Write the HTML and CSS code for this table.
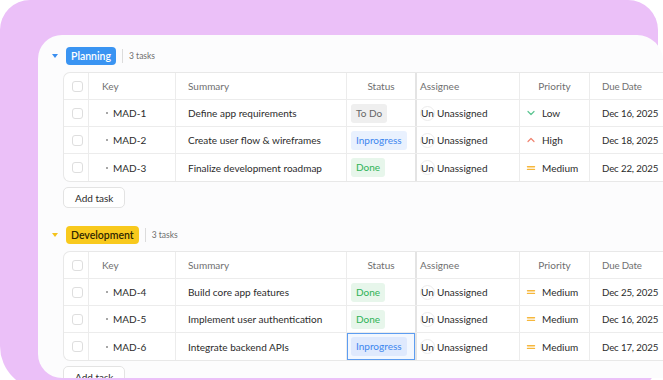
FILE: index.html
```html
<!DOCTYPE html>
<html>
<head>
<meta charset="utf-8">
<link rel="stylesheet" href="styles.css">
</head>
<body>
<div class="frame">
  <div class="card">
    <section class="group">
      <div class="group-head">
        <span class="caret caret-blue"></span>
        <span class="badge badge-blue">Planning</span>
        <span class="sep"></span>
        <span class="count">3 tasks</span>
      </div>
      <div class="table">
        <div class="row head">
          <div class="cell c-check"><span class="box"></span></div>
          <div class="cell c-key">Key</div>
          <div class="cell c-sum">Summary</div>
          <div class="cell c-status center">Status</div>
          <div class="cell c-assign">Assignee</div>
          <div class="cell c-prio center">Priority</div>
          <div class="cell c-date">Due Date</div>
        </div>
        <div class="row">
          <div class="cell c-check"><span class="box"></span></div>
          <div class="cell c-key"><span class="dot"></span>MAD-1</div>
          <div class="cell c-sum">Define app requirements</div>
          <div class="cell c-status"><span class="pill todo">To Do</span></div>
          <div class="cell c-assign"><span class="avatar">Un</span>Unassigned</div>
          <div class="cell c-prio"><svg class="picon" viewBox="0 0 10 10"><path d="M2 3.5 L5 6.5 L8 3.5" fill="none" stroke="#5cc592" stroke-width="1.2" stroke-linecap="round" stroke-linejoin="round"/></svg>Low</div>
          <div class="cell c-date">Dec 16, 2025</div>
        </div>
        <div class="row">
          <div class="cell c-check"><span class="box"></span></div>
          <div class="cell c-key"><span class="dot"></span>MAD-2</div>
          <div class="cell c-sum">Create user flow &amp; wireframes</div>
          <div class="cell c-status"><span class="pill prog">Inprogress</span></div>
          <div class="cell c-assign"><span class="avatar">Un</span>Unassigned</div>
          <div class="cell c-prio"><svg class="picon" viewBox="0 0 10 10"><path d="M2 6.5 L5 3.5 L8 6.5" fill="none" stroke="#f08470" stroke-width="1.2" stroke-linecap="round" stroke-linejoin="round"/></svg>High</div>
          <div class="cell c-date">Dec 18, 2025</div>
        </div>
        <div class="row">
          <div class="cell c-check"><span class="box"></span></div>
          <div class="cell c-key"><span class="dot"></span>MAD-3</div>
          <div class="cell c-sum">Finalize development roadmap</div>
          <div class="cell c-status"><span class="pill done">Done</span></div>
          <div class="cell c-assign"><span class="avatar">Un</span>Unassigned</div>
          <div class="cell c-prio"><svg class="picon" viewBox="0 0 10 10"><path d="M1.5 3.8 H8.5 M1.5 6.4 H8.5" fill="none" stroke="#f6b73c" stroke-width="1.4" stroke-linecap="round"/></svg>Medium</div>
          <div class="cell c-date">Dec 22, 2025</div>
        </div>
      </div>
      <button class="add">Add task</button>
    </section>

    <section class="group">
      <div class="group-head">
        <span class="caret caret-yellow"></span>
        <span class="badge badge-yellow">Development</span>
        <span class="sep"></span>
        <span class="count">3 tasks</span>
      </div>
      <div class="table">
        <div class="row head">
          <div class="cell c-check"><span class="box"></span></div>
          <div class="cell c-key">Key</div>
          <div class="cell c-sum">Summary</div>
          <div class="cell c-status center">Status</div>
          <div class="cell c-assign">Assignee</div>
          <div class="cell c-prio center">Priority</div>
          <div class="cell c-date">Due Date</div>
        </div>
        <div class="row">
          <div class="cell c-check"><span class="box"></span></div>
          <div class="cell c-key"><span class="dot"></span>MAD-4</div>
          <div class="cell c-sum">Build core app features</div>
          <div class="cell c-status"><span class="pill done">Done</span></div>
          <div class="cell c-assign"><span class="avatar">Un</span>Unassigned</div>
          <div class="cell c-prio"><svg class="picon" viewBox="0 0 10 10"><path d="M1.5 3.8 H8.5 M1.5 6.4 H8.5" fill="none" stroke="#f6b73c" stroke-width="1.4" stroke-linecap="round"/></svg>Medium</div>
          <div class="cell c-date">Dec 25, 2025</div>
        </div>
        <div class="row">
          <div class="cell c-check"><span class="box"></span></div>
          <div class="cell c-key"><span class="dot"></span>MAD-5</div>
          <div class="cell c-sum">Implement user authentication</div>
          <div class="cell c-status"><span class="pill done">Done</span></div>
          <div class="cell c-assign"><span class="avatar">Un</span>Unassigned</div>
          <div class="cell c-prio"><svg class="picon" viewBox="0 0 10 10"><path d="M1.5 3.8 H8.5 M1.5 6.4 H8.5" fill="none" stroke="#f6b73c" stroke-width="1.4" stroke-linecap="round"/></svg>Medium</div>
          <div class="cell c-date">Dec 16, 2025</div>
        </div>
        <div class="row">
          <div class="cell c-check"><span class="box"></span></div>
          <div class="cell c-key"><span class="dot"></span>MAD-6</div>
          <div class="cell c-sum">Integrate backend APIs</div>
          <div class="cell c-status selected"><span class="pill prog sel">Inprogress</span></div>
          <div class="cell c-assign"><span class="avatar">Un</span>Unassigned</div>
          <div class="cell c-prio"><svg class="picon" viewBox="0 0 10 10"><path d="M1.5 3.8 H8.5 M1.5 6.4 H8.5" fill="none" stroke="#f6b73c" stroke-width="1.4" stroke-linecap="round"/></svg>Medium</div>
          <div class="cell c-date">Dec 17, 2025</div>
        </div>
      </div>
      <button class="add">Add task</button>
    </section>
  </div>
</div>
</body>
</html>
```

FILE: styles.css
```css
* { box-sizing: border-box; }
html, body {
  margin: 0;
  padding: 0;
  background: #ffffff;
  width: 663px;
  height: 380px;
  overflow: hidden;
  font-family: "Lato", "Open Sans", sans-serif;
  color: #2b2b2b;
}
.frame {
  width: 658px;
  height: 390px;
  background: #ebc0f8;
  border-radius: 30px 30px 30px 44px;
  padding: 35px 0 0 38px;
}
.card {
  width: 625px;
  height: 343px;
  background: #fcfcfd;
  border-radius: 24px 26px 0 24px;
  overflow: hidden;
  padding: 12px 0 0 13px;
}
.group-head {
  display: flex;
  align-items: center;
  height: 18px;
  margin-bottom: 7px;
}
.group + .group .group-head { margin-top: 1px; }
.caret {
  width: 0;
  height: 0;
  border-left: 3.5px solid transparent;
  border-right: 3.5px solid transparent;
  border-top: 4.5px solid #3a8ef0;
  margin: 0 8px 0 1px;
}
.caret-yellow { border-top-color: #f4c21c; }
.badge {
  height: 18px;
  line-height: 18px;
  padding: 0 5px;
  border-radius: 4px;
  font-size: 10.5px;
  font-weight: 600;
}
.badge-blue { background: #3a94f2; color: #ffffff; }
.badge-yellow { background: #f8c91d; color: #2f2600; }
.sep {
  width: 1px;
  height: 14px;
  background: #dcdcdc;
  margin: 0 6px;
}
.count { font-size: 8.5px; color: #6e6e6e; }
.table {
  margin-left: 12px;
  width: 640px;
  border: 1px solid #e8e8e8;
  border-right: none;
  border-radius: 7px 0 0 7px;
  background: #ffffff;
}
.row {
  display: grid;
  grid-template-columns: 25px 87px 171px 70px 103px 70px 114px;
  height: 27px;
  border-bottom: 1px solid #ececec;
}
.row:last-child { border-bottom: none; }
.cell {
  display: flex;
  align-items: center;
  border-right: 1px solid #ececec;
  font-size: 10px;
  white-space: nowrap;
  padding-left: 12px;
}
.head .cell { color: #6f6f6f; }
.cell.center { justify-content: center; padding-left: 0; }
.c-check { padding-left: 8px; }
.c-key { padding-left: 17px; }
.head .c-key { padding-left: 13px; }
.c-status { padding-left: 4px; border-right: 2px solid #e4e4e4; }
.c-assign { padding-left: 3px; }
.c-prio { padding-left: 6px; }
.c-date { border-right: none; letter-spacing: -0.15px; font-size: 9.7px; }
.dot {
  width: 2px;
  height: 2px;
  border-radius: 50%;
  background: #8a8a8a;
  margin-right: 5px;
}
.box {
  width: 11px;
  height: 11px;
  border: 1px solid #dedede;
  border-radius: 3px;
  background: #fff;
}
.pill {
  height: 19px;
  line-height: 19px;
  padding: 0 5px;
  border-radius: 3px;
  font-size: 10px;
}
.todo { background: #efefef; color: #666666; }
.prog { background: #e9f1fe; color: #3d86ef; }
.done { background: #e7f6eb; color: #2db356; }
.selected {
  background: #f2f7ff;
  box-shadow: inset 0 0 0 1px #5d9df1;
}
.prog.sel { background: #dfe9fd; }
.avatar {
  width: 15px;
  height: 15px;
  border-radius: 50%;
  border: 1px solid #ececec;
  display: inline-flex;
  align-items: center;
  justify-content: center;
  margin-right: 2px;
  font-size: 10px;
}
.picon { width: 10px; height: 10px; margin-right: 6px; }
.add {
  margin: 5px 0 17px 12px;
  height: 21px;
  padding: 0 11px;
  border: 1px solid #e3e3e3;
  border-radius: 5px;
  background: #ffffff;
  font-family: inherit;
  font-size: 10px;
  color: #2b2b2b;
}
```
